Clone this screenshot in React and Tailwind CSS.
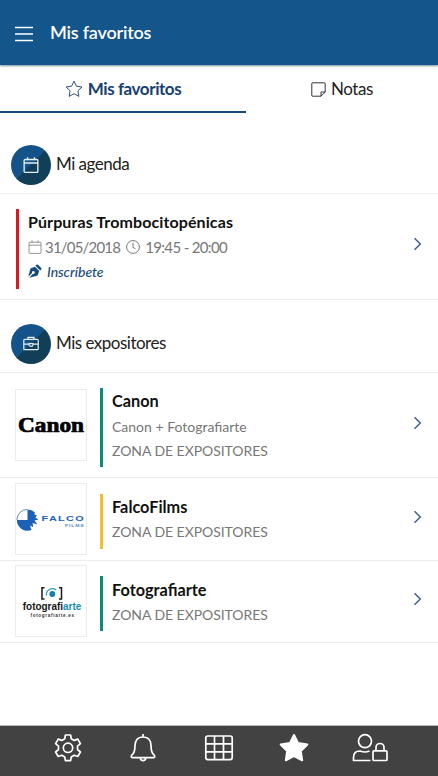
const Chevron = () => (
    <svg className="mr-[15px] shrink-0" width="10" height="14" viewBox="0 0 10 14" fill="none" stroke="#3f618c" strokeWidth="1.5">
        <path d="M1.5 1.2 L7.3 7 L1.5 12.8" />
    </svg>
);

const CalendarIcon = ({ size, color, width = 1 }) => (
    <svg className="shrink-0" width={size} height={size} viewBox="0 0 14 14" fill="none" stroke={color} strokeWidth={width}>
        <rect x="1" y="2.2" width="12" height="11.2" rx="0.8" />
        <path d="M1 5.2 H13 M4 0.3 V2.8 M10 0.3 V2.8" />
    </svg>
);

const BriefcaseIcon = () => (
    <svg width="16" height="16" viewBox="0 0 16 16" fill="none" stroke="#e4eef6" strokeWidth="1.2">
        <rect x="0.8" y="3.3" width="14.4" height="10.4" rx="1" />
        <path d="M5 3.3 V1.3 H11 V3.3 M0.8 8.1 H6 M10 8.1 H15.2" />
        <path d="M6 7.7 H10 V8.7 A2 1.6 0 0 1 6 8.7 Z" />
    </svg>
);

const CanonLogo = () => (
    <svg width="70" height="70" viewBox="0 0 70 70">
        <text x="2" y="41.6" fontFamily="'Liberation Serif', serif" fontWeight="700" fontSize="20" textLength="66" lengthAdjust="spacingAndGlyphs" fill="#000" stroke="#000" strokeWidth="0.7">
            Canon
        </text>
    </svg>
);

const FalcoLogo = () => (
    <svg width="70" height="70" viewBox="0 0 70 70">
        <path d="M11.5 25.4 A10.5 10.5 0 0 0 0.9 36" fill="none" stroke="#1c61b5" strokeWidth="0.7" />
        <path d="M11.5 25.4 Q16 25.5 19 28.5 L18.3 30.4 L21 31.2 L19.3 33.5 L22.5 35.6 L18.5 36.6 L21.5 40.4 L16.6 39 L17.2 43.2 L14 41.5 L15.5 46 A10.6 10.6 0 0 1 0.9 36 H11.5 Z" fill="#1c61b5" />
        <text x="25.5" y="37.4" fontFamily="'Liberation Sans', sans-serif" fontWeight="700" fontSize="8" textLength="43.5" lengthAdjust="spacingAndGlyphs" letterSpacing="1" fill="#1c61b5">
            FALCO
        </text>
        <text x="49" y="42.6" fontFamily="'Liberation Sans', sans-serif" fontWeight="700" fontSize="4" textLength="19.5" lengthAdjust="spacingAndGlyphs" letterSpacing="0.7" fill="#4f88c8">
            FILMS
        </text>
    </svg>
);

const FotoLogo = () => (
    <svg width="70" height="70" viewBox="0 0 70 70">
        <g fill="none" stroke="#1b1b1b" strokeWidth="1.5">
            <path d="M28.5 21.8 H26 V33 H28.5 M43 21.8 H45.5 V33 H43" />
        </g>
        <path d="M30.4 29.5 A6 6 0 0 1 40 24" fill="none" stroke="#2b9dbb" strokeWidth="1.3" />
        <circle cx="36.3" cy="28" r="2.9" fill="#147db0" />
        <text x="6.8" y="44.2" fontFamily="'Liberation Sans', sans-serif" fontWeight="700" fontSize="10.4" textLength="58.5" lengthAdjust="spacingAndGlyphs" fill="#161616">
            fotografi<tspan fill="#158fb2">arte</tspan>
        </text>
        <text x="14.5" y="51.4" fontFamily="'Liberation Sans', sans-serif" fontWeight="700" fontSize="4.6" textLength="43.5" lengthAdjust="spacing" fill="#333">
            fotografiarte.es
        </text>
    </svg>
);

const expositores = [
    { nombre: "Canon", detalle: "Canon + Fotografiarte", zona: "ZONA DE EXPOSITORES", logo: <CanonLogo />, fila: "h-[105px] pt-[15px]", caja: "mt-px", barra: "h-[79px] bg-[#0d8a7b]", texto: "pt-px", flecha: "pt-[28px]" },
    { nombre: "FalcoFilms", zona: "ZONA DE EXPOSITORES", logo: <FalcoLogo />, fila: "h-[83px] pt-[5px]", caja: "", barra: "mt-[11px] h-[55px] bg-[#eec02f]", texto: "pt-[12px]", flecha: "pt-[27px]" },
    { nombre: "Fotografiarte", zona: "ZONA DE EXPOSITORES", logo: <FotoLogo />, fila: "h-[82px] pt-[4px]", caja: "", barra: "mt-[11px] h-[55px] bg-[#0d8a7b]", texto: "pt-[12.5px]", flecha: "pt-[27px]" },
];

const Seccion = ({ titulo, children }) => (
    <div className="flex h-[49px] items-start border-b border-[#ebebeb] pl-[11px]">
        <div className="flex h-10 w-10 items-center justify-center rounded-full bg-[linear-gradient(135deg,#14528a_50%,#113f57_50%)]">
            {children}
        </div>
        <h2 className="ml-[5px] pt-[7px] text-[17px] leading-6 tracking-[-0.5px] text-[#222]">{titulo}</h2>
    </div>
);

export default function App() {
    return (
        <div className="flex h-[776px] w-full flex-col overflow-hidden bg-white font-['Lato',sans-serif]">
            <header className="z-10 flex h-[65px] shrink-0 items-center bg-[#14558b] pl-[15px] shadow-[0_1px_2px_rgba(0,50,70,0.55)]">
                <svg className="mt-[2px]" width="18" height="16" viewBox="0 0 18 16" stroke="#fff" strokeWidth="1.3">
                    <path d="M0 1.5 H18 M0 8 H18 M0 14.5 H18" />
                </svg>
                <h1 className="ml-[17px] text-[18px] font-semibold tracking-[-0.2px] text-white">Mis favoritos</h1>
            </header>

            {/* Pestañas */}
            <nav className="flex h-12 shrink-0 text-[17px] tracking-[-0.42px]">
                <div className="flex w-[246px] items-center justify-center gap-[5px] border-b-2 border-[#154b78] pt-[2px] font-bold text-[#173f70]">
                    <svg width="18" height="18" viewBox="0 0 18 18" fill="none" stroke="#315278" strokeWidth="1" strokeLinejoin="round">
                        <path d="M9 1.2 L11.4 6.2 L17 7 L12.9 10.8 L13.9 16.4 L9 13.7 L4.1 16.4 L5.1 10.8 L1 7 L6.6 6.2 Z" />
                    </svg>
                    <span>Mis favoritos</span>
                </div>
                <div className="flex flex-1 items-center justify-center gap-[5px] text-[#222]">
                    <svg width="15" height="15" viewBox="0 0 15 15" fill="none" stroke="#333" strokeWidth="1">
                        <path d="M1.5 0.8 H13.5 Q14.2 0.8 14.2 1.5 V10 L10 14.2 H1.5 Q0.8 14.2 0.8 13.5 V1.5 Q0.8 0.8 1.5 0.8 Z M10 14.2 V10 H14.2" />
                    </svg>
                    <span>Notas</span>
                </div>
            </nav>

            <main className="flex-1 pt-8">
                <Seccion titulo="Mi agenda">
                    <CalendarIcon size={16} color="#e4eef6" width={1.2} />
                </Seccion>

                <div className="flex h-[106px] items-start border-b border-[#ebebeb] pt-[15px] pl-4">
                    <div className="h-20 w-[3px] bg-[#d71920]" />
                    <div className="ml-[9px] flex-1 pt-px">
                        <h3 className="text-[16px] leading-6 font-bold tracking-[0.1px] text-[#111]">Púrpuras Trombocitopénicas</h3>
                        <div className="flex h-[26px] items-center text-[15px] tracking-[-0.8px] text-[#777]">
                            <CalendarIcon size={14} color="#888" width={0.9} />
                            <span className="ml-[3px]">31/05/2018</span>
                            <svg className="mr-[5px] ml-[6px]" width="14" height="14" viewBox="0 0 14 14" fill="none" stroke="#777">
                                <circle cx="7" cy="7" r="6.4" />
                                <path d="M7 2.8 V7.3 L9.5 8.8" />
                            </svg>
                            <span className="tracking-[-0.65px]">19:45 - 20:00</span>
                        </div>
                        <div className="flex h-[22px] items-center gap-[5px] text-[14px] font-medium tracking-[-0.05px] text-[#174a7c] italic">
                            <svg width="14" height="14" viewBox="0 0 14 14" fill="#174a7c">
                                <path d="M8.5 0.8 Q9.2 0 10 0.8 L13.2 4 Q14 4.8 13.2 5.5 L12.2 6.5 L7.5 1.8 Z" />
                                <path d="M7 2.8 L11.2 7 L9.8 11 Q9.6 11.5 9 11.7 L1.3 13.8 L5 9.8 A1.4 1.4 0 1 0 4.1 9 L0.3 12.8 L2.3 5 Q2.5 4.4 3 4.2 Z" />
                            </svg>
                            <span>Inscríbete</span>
                        </div>
                    </div>
                    <div className="pt-7">
                        <Chevron />
                    </div>
                </div>

                <div className="pt-6">
                    <Seccion titulo="Mis expositores">
                        <BriefcaseIcon />
                    </Seccion>
                </div>

                {expositores.map((item) => (
                    <div key={item.nombre} className={`flex items-start border-b border-[#ebebeb] pl-[15px] ${item.fila}`}>
                        <div className={`h-[72px] w-[72px] border border-[#ececec] ${item.caja}`}>{item.logo}</div>
                        <div className={`ml-[13px] w-[3px] ${item.barra}`} />
                        <div className={`ml-[9px] flex-1 ${item.texto}`}>
                            <h3 className="text-[16.3px] leading-6 font-bold text-[#111]">{item.nombre}</h3>
                            {item.detalle && <p className="pt-[2px] text-[14px] leading-6 text-[#777]">{item.detalle}</p>}
                            <p className={`text-[14px] leading-6 tracking-[-0.05px] text-[#777] ${item.detalle ? "" : "pt-px"}`}>{item.zona}</p>
                        </div>
                        <div className={item.flecha}>
                            <Chevron />
                        </div>
                    </div>
                ))}
            </main>

            <footer className="flex h-[51px] shrink-0 gap-[45.5px] border-t border-[#bbb] bg-[#424242] pt-[7px] pl-[52.5px]">
                <svg width="30" height="30" viewBox="0 0 30 30" fill="none" stroke="#fff" strokeWidth="1.7" strokeLinejoin="round">
                    <path d="M12.4 2 H17.6 L18.3 5.8 L21.2 7.4 L24.8 6.1 L27.4 10.6 L24.5 13.1 V16.5 L27.4 19 L24.8 23.5 L21.2 22.2 L18.3 23.9 L17.6 27.6 H12.4 L11.7 23.9 L8.8 22.2 L5.2 23.5 L2.6 19 L5.5 16.5 V13.1 L2.6 10.6 L5.2 6.1 L8.8 7.4 L11.7 5.8 Z" />
                    <circle cx="15" cy="14.8" r="4.7" />
                </svg>
                <svg width="30" height="30" viewBox="0 0 30 30" fill="none" stroke="#fff" strokeWidth="1.7" strokeLinejoin="round">
                    <path d="M15 1 V4 C9.5 4 7 8 7 12.5 C7 19 5.5 20.5 3.5 22.5 Q2.8 24.6 4.5 24.6 H25.5 Q27.2 24.6 26.5 22.5 C24.5 20.5 23 19 23 12.5 C23 8 20.5 4 15 4" />
                    <path d="M12.3 24.8 A2.7 2.9 0 0 0 17.7 24.8" />
                </svg>
                <svg width="30" height="30" viewBox="0 0 30 30" fill="none" stroke="#fff" strokeWidth="1.7">
                    <rect x="1.8" y="3" width="26.4" height="23.6" rx="2" />
                    <path d="M10.5 3 V26.6 M19.5 3 V26.6 M1.8 10.8 H28.2 M1.8 18.8 H28.2" />
                </svg>
                <svg width="30" height="30" viewBox="0 0 30 30" fill="#fff" stroke="#fff" strokeWidth="2" strokeLinejoin="round">
                    <path d="M15 2 L19 10 L28.3 11.5 L21.8 18 L23.2 27.3 L15 23 L6.8 27.3 L8.2 18 L1.7 11.5 L11 10 Z" />
                </svg>
                <svg className="-ml-[3px]" width="36" height="30" viewBox="0 0 36 30" fill="none" stroke="#fff" strokeWidth="1.7" strokeLinejoin="round">
                    <circle cx="13" cy="8.2" r="6.5" />
                    <path d="M18.5 27.5 H1.5 V24.5 Q1.5 18 8 18 Q13 20 17.5 18" />
                    <rect x="21" y="17.8" width="14" height="9.7" rx="1" />
                    <path d="M24 17.8 V14.5 A4 4 0 0 1 32 14.5 V17.8" />
                </svg>
            </footer>
        </div>
    );
}
